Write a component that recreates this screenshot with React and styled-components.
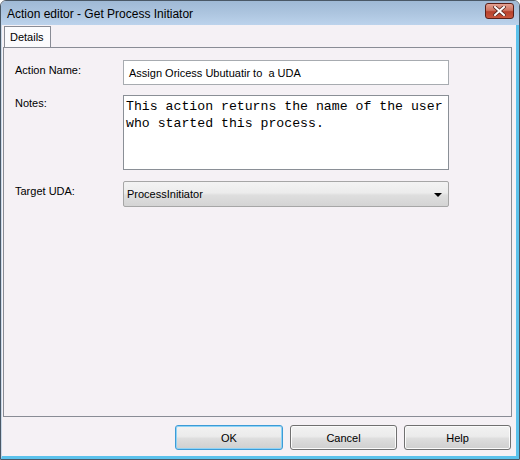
import React from "react";
import styled, { createGlobalStyle } from "styled-components";

const GlobalStyle = createGlobalStyle`
  html, body { margin: 0; padding: 0; background: #fff; }
  body { font-family: "Liberation Sans", Arial, sans-serif; }
`;

const Window = styled.div`
  width: 520px;
  height: 460px;
  box-sizing: border-box;
  display: flex;
  flex-direction: column;
  background: #f5f1f5;
  border: 1px solid #4a5866;
  border-radius: 6px 6px 0 0;
  overflow: hidden;
`;

const TitleBar = styled.div`
  height: 24px;
  flex-shrink: 0;
  display: flex;
  align-items: center;
  justify-content: space-between;
  padding: 0 5px 0 6px;
  background: linear-gradient(to bottom, #9fb9d5 0%, #aec6e0 55%, #bcd3ec 100%);
`;

const Title = styled.span`
  font-size: 12px;
  color: #000;
  padding-top: 1px;
`;

const CloseButton = styled.div`
  width: 29px;
  height: 16px;
  margin-top: -4px;
  box-sizing: border-box;
  border: 1px solid #5a1f18;
  border-radius: 3px;
  background: linear-gradient(to bottom, #e3a192 0%, #cf7461 45%, #b7412c 55%, #c8563e 100%);
  display: flex;
  align-items: center;
  justify-content: center;
`;

const Body = styled.div`
  flex: 1;
  display: flex;
  flex-direction: column;
  padding: 1px 2px 0 1px;
  border-right: 3px solid #5bc2ec;
  border-bottom: 3px solid #5bc2ec;
  border-left: 1px solid #c8d8e8;
`;

const TabStrip = styled.div`
  display: flex;
  height: 21px;
  padding-left: 1px;
`;

const Tab = styled.div`
  box-sizing: border-box;
  height: 21px;
  padding: 4px 6px 0 5px;
  font-size: 11px;
  background: #fbfbfd;
  border: 1px solid #898c95;
  border-bottom: none;
  margin-bottom: -1px;
  position: relative;
  z-index: 1;
`;

const Panel = styled.div`
  box-sizing: border-box;
  height: 370px;
  width: 509px;
  border: 1px solid #898c95;
  padding: 12px 0 0 11px;
  display: grid;
  grid-template-columns: 108px 326px;
  align-content: start;
  row-gap: 10px;
  align-items: start;
`;

const Label = styled.label`
  font-size: 11px;
  color: #000;
  padding-top: ${(p) => p.$offset || 4}px;
`;

const TextField = styled.div`
  box-sizing: border-box;
  height: 25px;
  background: #fff;
  border: 1px solid #a7abb0;
  font-size: 11px;
  padding: 6px 5px 0;
  white-space: pre;
`;

const Notes = styled.div`
  box-sizing: border-box;
  height: 75px;
  background: #fff;
  border: 1px solid #8a8f96;
  font-family: "Liberation Mono", "Courier New", monospace;
  font-size: 13.2px;
  line-height: 17px;
  padding: 2px 2px 0;
`;

const Select = styled.div`
  box-sizing: border-box;
  height: 26px;
  margin-top: 1px;
  border: 1px solid #a6a6a6;
  border-radius: 2px;
  background: linear-gradient(to bottom, #f3f3f3 0%, #ececec 45%, #dedede 55%, #d4d4d4 100%);
  font-size: 11px;
  display: flex;
  align-items: center;
  justify-content: space-between;
  padding: 0 6px 0 3px;
`;

const Arrow = styled.span`
  width: 0;
  height: 0;
  border-left: 4px solid transparent;
  border-right: 4px solid transparent;
  border-top: 4px solid #000;
  margin-top: 1px;
`;

const ButtonRow = styled.div`
  display: flex;
  justify-content: flex-end;
  gap: 7px;
  padding: 8px 3px 0 0;
`;

const Button = styled.div`
  box-sizing: border-box;
  width: ${(p) => p.$w || 107}px;
  height: 25px;
  border: 1px solid ${(p) => (p.$default ? "#3c9bd6" : "#707070")};
  box-shadow: ${(p) => (p.$default ? "inset 0 0 0 1px #8fd3f6" : "inset 0 0 0 1px #fbfbfb")};
  border-radius: 3px;
  background: linear-gradient(to bottom, #f2f2f2 0%, #ebebeb 45%, #dddddd 55%, #cfcfcf 100%);
  font-size: 11px;
  display: flex;
  align-items: center;
  justify-content: center;
`;

export default function App() {
  return (
    <>
      <GlobalStyle />
      <Window>
        <TitleBar>
          <Title>Action editor - Get Process Initiator</Title>
          <CloseButton>
            <svg width="13" height="10" viewBox="0 0 13 10">
              <path
                d="M2 1 L11 9 M11 1 L2 9"
                stroke="#5a2a24"
                strokeWidth="3.6"
                strokeLinecap="square"
              />
              <path
                d="M2 1 L11 9 M11 1 L2 9"
                stroke="#ffffff"
                strokeWidth="2"
                strokeLinecap="square"
              />
            </svg>
          </CloseButton>
        </TitleBar>
        <Body>
          <TabStrip>
            <Tab>Details</Tab>
          </TabStrip>
          <Panel>
            <Label>Action Name:</Label>
            <TextField>Assign Oricess Ubutuatir to  a UDA</TextField>
            <Label $offset={2}>Notes:</Label>
            <Notes>
              This action returns the name of the user who started this process.
            </Notes>
            <Label $offset={5}>Target UDA:</Label>
            <Select>
              <span>ProcessInitiator</span>
              <Arrow />
            </Select>
          </Panel>
          <ButtonRow>
            <Button $default $w={108}>OK</Button>
            <Button>Cancel</Button>
            <Button>Help</Button>
          </ButtonRow>
        </Body>
      </Window>
    </>
  );
}
